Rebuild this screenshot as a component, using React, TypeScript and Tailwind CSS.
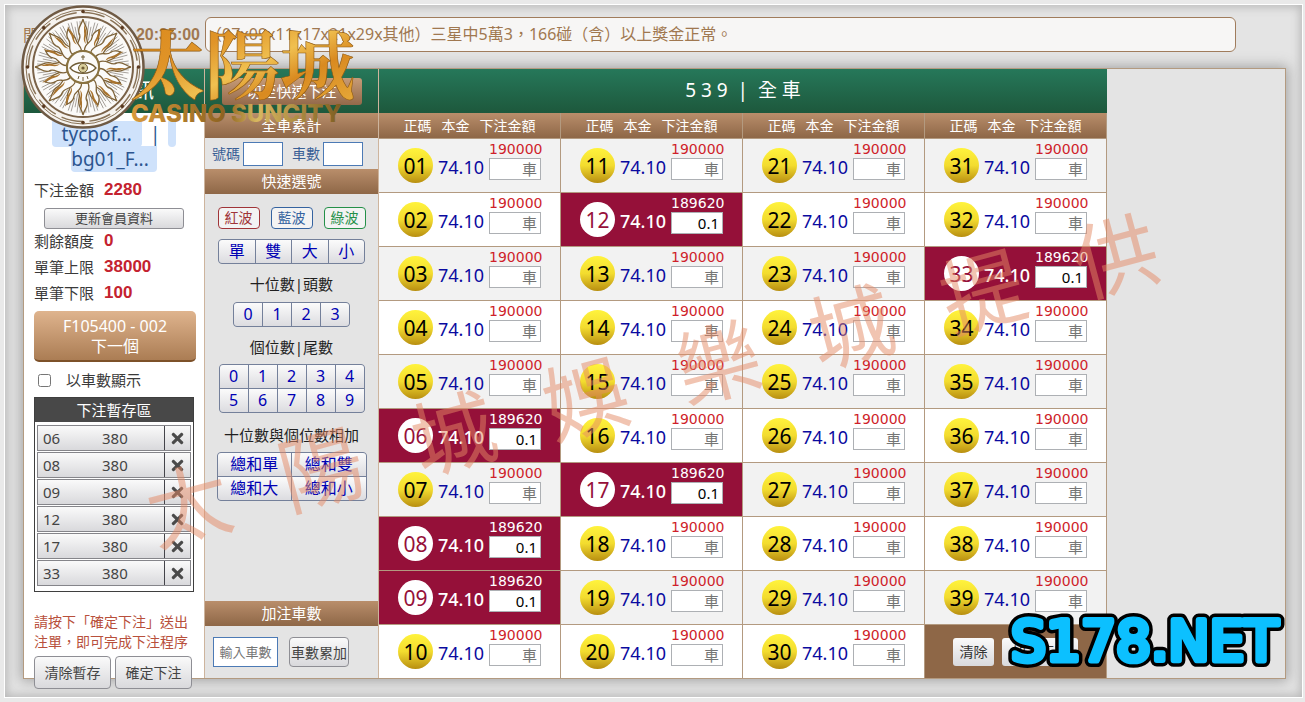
import React from 'react';
import { FaTimes } from 'react-icons/fa';

const SELECTED = [6, 8, 9, 12, 17, 33];
const pad = (n: number) => String(n).padStart(2, '0');

const GREY_BTN =
  'border border-[#8e8e94] bg-linear-to-b from-[#fafafa] to-[#d9d9dc] text-[#444444]';
const BAR =
  'bg-linear-to-b from-[#b98e6b] to-[#8e6747] text-white text-[15px] leading-[25px] text-center';

function Stat({ label, value }: { label: string; value: string }) {
  return (
    <div className="flex h-[26px] items-center gap-[10px]">
      <span className="text-[15px] text-[#3a3a3a]">{label}</span>
      <span className="font-['Liberation_Sans',Arial,sans-serif] text-[17px] font-bold text-[#c4222f]">
        {value}
      </span>
    </div>
  );
}

function Group({ items, cols, width }: { items: string[]; cols: string; width: string }) {
  return (
    <div
      className={`mx-auto grid gap-px overflow-hidden rounded border border-[#74809a] bg-[#74809a] ${cols} ${width}`}
    >
      {items.map((t) => (
        <button
          key={t}
          type="button"
          className="h-[23px] bg-linear-to-b from-[#fbfbfb] to-[#dcdce0] text-[16px] leading-[23px] text-[#0000b4]"
        >
          {t}
        </button>
      ))}
    </div>
  );
}

function Member() {
  return (
    <section className="flex w-[180px] shrink-0 flex-col bg-white">
      <h2 className="h-[44px] bg-linear-to-b from-[#26785a] to-[#1d583c] text-center text-[20px] leading-[44px] text-white">
        會員資訊
      </h2>
      <div className="flex flex-col px-[10px]">
        <div className="mt-[9px] text-center text-[19px] leading-[25px] text-[#2c5590]">
          <span className="rounded-b bg-[#cfe2fb] px-[10px]">tycpof...</span>
          <span className="px-[8px]">|</span>
          <span className="rounded-b bg-[#cfe2fb] px-[4px]" />
          <br />
          <span className="rounded-b bg-[#cfe2fb] pr-[8px]">bg01_F...</span>
        </div>
        <div className="mt-[5px]">
          <Stat label="下注金額" value="2280" />
        </div>
        <button
          type="button"
          className={`${GREY_BTN} mx-auto mt-[5px] h-[21px] w-[140px] rounded-[3px] text-[13px] leading-[19px]`}
        >
          更新會員資料
        </button>
        <div className="-mt-px">
          <Stat label="剩餘額度" value="0" />
          <Stat label="單筆上限" value="38000" />
          <Stat label="單筆下限" value="100" />
        </div>
        <button
          type="button"
          className="mt-[5px] h-[51px] w-[162px] rounded-[5px] border-b-2 border-[#7d5129] bg-linear-to-b from-[#dfb48e] to-[#ab7d54] text-[16px] leading-[20px] text-white"
        >
          F105400 - 002
          <br />
          下一個
        </button>
        <label className="mt-[6px] flex h-[25px] items-center gap-[15px] pl-[4px] text-[15px] text-[#3a3a3a]">
          <input type="checkbox" className="size-[13px]" />
          以車數顯示
        </label>
        <div className="mt-[4px] border border-[#3f3f3f]">
          <h3 className="h-[24px] bg-[#484848] text-center text-[15px] leading-[24px] text-white">
            下注暫存區
          </h3>
          <ul className="flex flex-col gap-px px-[2px] pt-[3px] pb-[5px]">
            {SELECTED.map((n) => (
              <li
                key={n}
                className="flex h-[26px] border border-[#85858a] bg-linear-to-b from-[#fafafa] to-[#d9d9dc] text-[15px] leading-[25px] text-[#444444]"
              >
                <span className="w-[64px] pl-[5px]">{pad(n)}</span>
                <span className="flex-1">380</span>
                <button
                  type="button"
                  aria-label={`刪除 ${pad(n)}`}
                  className="flex w-[26px] items-center justify-center border-l border-[#44444a]"
                >
                  <FaTimes size={17} color="#4a4a4a" />
                </button>
              </li>
            ))}
          </ul>
        </div>
        <p className="mt-[20px] text-[14px] leading-[20px] text-[#b8503c]">
          請按下「確定下注」送出注單，即可完成下注程序
        </p>
        <div className="mt-[4px] -mb-[14px] flex gap-[4px] text-[14px]">
          <button type="button" className={`${GREY_BTN} h-[33px] w-[77px] rounded-[4px]`}>
            清除暫存
          </button>
          <button type="button" className={`${GREY_BTN} h-[33px] w-[77px] rounded-[4px]`}>
            確定下注
          </button>
        </div>
      </div>
    </section>
  );
}

function Quick() {
  const field = 'h-[24px] w-[40px] border border-[#4c7ab5] bg-white px-1';
  const wave = 'h-[22px] w-[42px] rounded-[4px] border bg-[#f3f3f3] text-[14px] leading-[20px]';
  return (
    <section className="flex w-[175px] shrink-0 flex-col border-x border-[#cdb49d] bg-[#e4e4e4]">
      <div className="flex h-[44px] items-center justify-center bg-linear-to-b from-[#26785a] to-[#1d583c]">
        <button
          type="button"
          className="h-[27px] w-[140px] rounded-[3px] bg-linear-to-b from-[#c79c78] to-[#93694a] text-[15px] leading-[25px] text-white"
        >
          切至快速下注
        </button>
      </div>
      <h3 className={BAR}>全車累計</h3>
      <div className="flex h-[31px] items-center gap-[3px] pl-[7px] text-[14px] text-[#3a6096]">
        <label htmlFor="nos">號碼</label>
        <input id="nos" className={`${field} mr-[6px]`} />
        <label htmlFor="cars">車數</label>
        <input id="cars" className={field} />
      </div>
      <h3 className={BAR}>快速選號</h3>
      <div className="mt-[13px] flex justify-center gap-[11px]">
        <button type="button" className={`${wave} border-[#a03438] text-[#a03438]`}>
          紅波
        </button>
        <button type="button" className={`${wave} border-[#3563a0] text-[#3563a0]`}>
          藍波
        </button>
        <button type="button" className={`${wave} border-[#249048] text-[#249048]`}>
          綠波
        </button>
      </div>
      <div className="mt-[10px] flex flex-col text-center text-[15px] text-[#1f1f1f]">
        <Group items={['單', '雙', '大', '小']} cols="grid-cols-4" width="w-[147px]" />
        <p className="h-[38px] leading-[40px]">十位數|頭數</p>
        <Group items={['0', '1', '2', '3']} cols="grid-cols-4" width="w-[117px]" />
        <p className="h-[37px] leading-[40px]">個位數|尾數</p>
        <Group
          items={['0', '1', '2', '3', '4', '5', '6', '7', '8', '9']}
          cols="grid-cols-5"
          width="w-[146px]"
        />
        <p className="h-[39px] leading-[44px]">十位數與個位數相加</p>
        <Group
          items={['總和單', '總和雙', '總和大', '總和小']}
          cols="grid-cols-2"
          width="w-[150px]"
        />
      </div>
      <h3 className={`${BAR} mt-auto`}>加注車數</h3>
      <div className="flex h-[52px] items-center gap-[11px] pl-[8px]">
        <input
          aria-label="輸入車數"
          placeholder="輸入車數"
          className="h-[30px] w-[65px] border border-[#4c7ab5] bg-white text-center text-[13px] placeholder:text-[#757575]"
        />
        <button
          type="button"
          className={`${GREY_BTN} h-[30px] w-[60px] rounded-[4px] text-[14px] whitespace-nowrap`}
        >
          車數累加
        </button>
      </div>
    </section>
  );
}

function Cell({ n }: { n: number }) {
  const on = SELECTED.includes(n);
  return (
    <div className="flex h-[53px] justify-center gap-[5px] pt-[4px]">
      <span
        className={`mt-[5px] size-[35px] rounded-full text-center text-[21px] leading-[36px] ${
          on
            ? 'bg-white text-[#96103a]'
            : 'bg-linear-to-b from-[#fff33c] via-[#f3dc2f] to-[#b88f10] text-black'
        }`}
      >
        {pad(n)}
      </span>
      <span
        className={`mt-[12px] text-[18px] leading-[24px] ${on ? 'font-medium text-white' : 'text-[#0a0aa0]'}`}
      >
        74.10
      </span>
      <span className="flex w-[52px] flex-col gap-[2px]">
        <span
          className={`font-['DejaVu_Sans',Verdana,sans-serif] text-[14px] leading-[13px] ${
            on ? 'text-white' : 'text-[#cf1f2b]'
          }`}
        >
          {on ? '189620' : '190000'}
        </span>
        <input
          aria-label={`下注金額 ${pad(n)}`}
          placeholder="車"
          defaultValue={on ? '0.1' : ''}
          className="h-[22px] w-[52px] border border-[#adb0b4] bg-white pr-[3px] text-right text-[15px] leading-[20px] text-black placeholder:text-[#757575]"
        />
      </span>
    </div>
  );
}

function Board() {
  return (
    <section className="w-[728px] shrink-0">
      <h2 className="h-[44px] bg-linear-to-b from-[#26785a] to-[#1d583c] text-center text-[19px] leading-[42px] text-white">
        5 3 9&nbsp; |&nbsp; 全 車
      </h2>
      <table className="w-full table-fixed border-separate border-spacing-0">
        <thead>
          <tr>
            {[0, 1, 2, 3].map((c) => (
              <th
                key={c}
                className="border-r border-b border-[#b39a80] bg-linear-to-b from-[#b98e6b] to-[#8e6747] p-0 text-[14px] font-normal text-white"
              >
                <span className="flex h-[25px] items-center justify-center gap-[10px]">
                  <span>正碼</span>
                  <span>本金</span>
                  <span>下注金額</span>
                </span>
              </th>
            ))}
          </tr>
        </thead>
        <tbody>
          {[1, 2, 3, 4, 5, 6, 7, 8, 9, 10].map((r) => (
            <tr key={r} className="odd:bg-[#f2f2f2] even:bg-white">
              {[0, 10, 20, 30].map((c) => {
                const n = r + c;
                if (n > 39)
                  return (
                    <td key={c} className="border-r border-[#b39a80] bg-[#8e6747] p-0">
                      <div className="flex h-[53px] items-center gap-[8px] pl-[28px] text-[14px]">
                        <button
                          type="button"
                          className="h-[28px] w-[41px] rounded-[3px] bg-linear-to-b from-[#fafafa] to-[#d9d9dc] text-[#333333]"
                        >
                          清除
                        </button>
                        <button
                          type="button"
                          className="h-[28px] w-[76px] rounded-[3px] bg-linear-to-b from-[#fafafa] to-[#d9d9dc] text-[#333333]"
                        >
                          加入下單
                        </button>
                      </div>
                    </td>
                  );
                return (
                  <td
                    key={c}
                    className={`border-r border-[#b39a80] p-0 ${r < 10 ? 'border-b' : ''} ${
                      SELECTED.includes(n) ? 'bg-[#951039]' : ''
                    }`}
                  >
                    <Cell n={n} />
                  </td>
                );
              })}
            </tr>
          ))}
        </tbody>
      </table>
    </section>
  );
}

function Logo() {
  const angles = Array.from({ length: 16 }, (_, i) => i * 22.5);
  const hairs = Array.from({ length: 96 }, (_, i) => i * 3.75);
  return (
    <svg
      className="pointer-events-none absolute top-0 left-[16px]"
      width="350"
      height="132"
      viewBox="16 0 350 132"
      aria-label="太陽城 CASINO SUNCITY"
    >
      <defs>
        <linearGradient id="gold" x1="0" y1="0" x2="1" y2="1">
          <stop offset="0" stopColor="#d8861a" />
          <stop offset="0.35" stopColor="#e09428" />
          <stop offset="0.55" stopColor="#f0c050" />
          <stop offset="0.7" stopColor="#d98a20" />
          <stop offset="1" stopColor="#e8b040" />
        </linearGradient>
        <linearGradient id="bronze" x1="0" y1="0" x2="1" y2="0">
          <stop offset="0" stopColor="#d99a3c" />
          <stop offset="0.45" stopColor="#8c6220" />
          <stop offset="0.6" stopColor="#d9b860" />
          <stop offset="1" stopColor="#7c5c20" />
        </linearGradient>
      </defs>
      <g transform="translate(83 67)">
        <circle r="60.500" fill="#f6f3ef" stroke="#6f5a44" strokeWidth="2.500" />
        <circle r="57" fill="none" stroke="#8a7458" strokeWidth="1" />
        <circle r="54.500" fill="none" stroke="#8a7458" strokeWidth="1.500" strokeDasharray="22 6.500" />
        <circle r="50" fill="#fbfaf8" stroke="#7a6248" strokeWidth="2" />
        {hairs.map((a, i) => (
          <line
            key={a}
            x1={i % 2 ? 27 : 32}
            x2={i % 3 ? 46 : 41}
            y1="0"
            y2="0"
            stroke="#8b847c"
            strokeWidth="0.700"
            transform={`rotate(${a})`}
          />
        ))}
        {angles.map((a, i) => (
          <g key={a} transform={`rotate(${a})`}>
            <path
              d={
                i % 2
                  ? 'M-5-16C-8-23-1-26-3-31C-4-35-2-38 1-41C0-36 5-33 4-28C3-23 6-21 5-16Z'
                  : 'M-5-16C-9-24 0-28-4-34C-6-39-1-43 0-48C1-42 6-38 4-32C2-26 7-23 5-16Z'
              }
              fill="#fbfaf8"
              stroke="#7d6238"
              strokeWidth="1.300"
            />
            <path d="M1-44C1-40 5-36 3-31C2-28 2-26 3-23C-1-27 2-31 1-35Z" fill="#a8732e" />
            <circle cy="-55.500" r={i % 2 ? 0 : 1.8} fill="#5b3a20" />
          </g>
        ))}
        <circle r="16" fill="#fbfaf8" stroke="#8a7340" strokeWidth="2" />
        <path d="M-13 1C-7-6 7-6 13 1C7 8-7 8-13 1Z" fill="#fff" stroke="#6f5c34" strokeWidth="1.300" />
        <circle cy="1" r="4.500" fill="#d9cf9c" stroke="#6f5c34" strokeWidth="1" />
        <circle cy="1" r="1.600" fill="#6f5c34" />
        <path d="M0-12V-7M-2-10H2M-4 9L-5 12M0 10V14M4 9L5 12" stroke="#6f5c34" strokeWidth="1" />
      </g>
      <text
        x="130"
        y="93"
        fontSize="75"
        fontWeight="700"
        fill="url(#gold)"
        stroke="#8c5812"
        strokeWidth="0.600"
        fontFamily="'Noto Serif CJK TC', 'Noto Sans CJK TC', sans-serif"
      >
        太陽城
      </text>
      <text
        x="131"
        y="122"
        fontSize="24"
        fontWeight="800"
        fill="url(#bronze)"
        fontFamily="Inter, sans-serif"
      >
        CASINO SUNCITY
      </text>
    </svg>
  );
}

function Badge() {
  return (
    <svg
      className="pointer-events-none absolute top-[600px] left-[1000px]"
      width="300"
      height="80"
      viewBox="0 0 300 80"
      aria-label="S178.NET"
    >
      {[
        ['#000000', '13'],
        ['#0cc0ff', '6'],
      ].map(([color, w]) => (
        <text
          key={color}
          x="11"
          y="60"
          fontSize="55"
          fill={color}
          stroke={color}
          strokeWidth={w}
          strokeLinejoin="round"
          fontFamily="'DejaVu Sans', sans-serif"
        >
          S178.NET
        </text>
      ))}
    </svg>
  );
}

export default function App() {
  return (
    <div className="relative min-h-screen overflow-hidden bg-[#e9e9e9] pt-[4px] pr-[2px] pb-[4px] pl-[4px] font-['Noto_Sans','Noto_Sans_CJK_TC',sans-serif]">
      <main className="border border-white bg-[#e4e4e4] pt-[12px] pr-[15px] pb-[18px] pl-[17px] shadow-[inset_0_0_10px_2px_#b8b8b8]">
        <header className="flex items-center gap-[5px] text-[16px] text-[#a07850]">
          <div className="flex w-[178px] shrink-0 items-center justify-between pl-px">
            <span>開獎時間</span>
            <span className="font-['Liberation_Sans',Arial,sans-serif] text-[16px] font-bold">
              20:35:00
            </span>
          </div>
          <p className="mr-[51px] h-[35px] flex-1 rounded-[6px] border border-[#a07c5c] bg-[#f7f6f5] leading-[32px]">
            （07x09x11x17x21x29x其他）三星中5萬3，166碰（含）以上獎金正常。
          </p>
        </header>
        <div className="mt-[16px] mr-px ml-px flex border border-[#b39a80] bg-[#e4e4e4] shadow-[0_0_12px_2px_#a4a4a4]">
          <Member />
          <Quick />
          <Board />
        </div>
      </main>
      <div
        aria-hidden="true"
        className="pointer-events-none absolute top-[330px] left-[130px] flex w-[1044px] -rotate-[15deg] justify-between text-[84px] leading-[100px] text-[#e58a66] opacity-50"
      >
        {['太', '陽', '城', '娛', '樂', '城', '提', '供'].map((t, i) => (
          <span key={i}>{t}</span>
        ))}
      </div>
      <Logo />
      <Badge />
    </div>
  );
}
